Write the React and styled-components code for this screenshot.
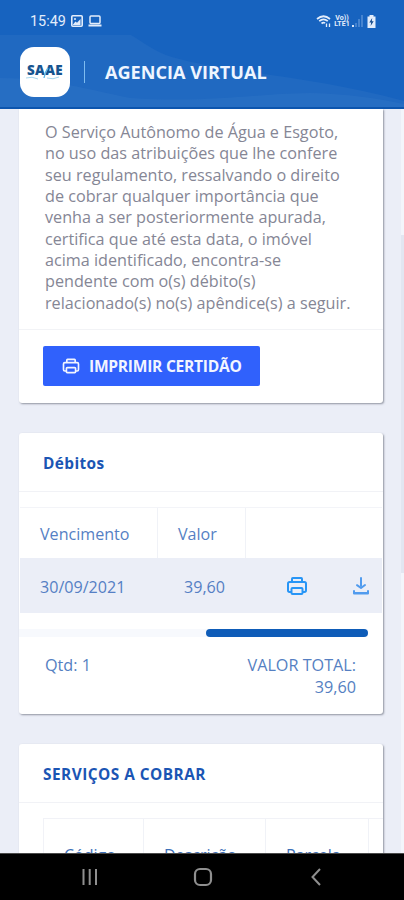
import React from "react"
import styled, { createGlobalStyle } from "styled-components"

const GlobalStyle = createGlobalStyle`
  * {
    box-sizing: border-box;
  }
  body {
    margin: 0;
    background-color: #ebeef7;
    font-family: "Open Sans", "Noto Sans", sans-serif;
  }
`

const Screen = styled.div`
  width: 404px;
  height: 900px;
  display: flex;
  flex-direction: column;
  overflow: hidden;
`

const Header = styled.header`
  position: relative;
  height: 109px;
  flex-shrink: 0;
  background-color: #1763bf;
  border-bottom: 2px solid #0c55ae;
`

const Waves = styled.svg`
  position: absolute;
  inset: 0;
`

const StatusBar = styled.div`
  position: relative;
  display: flex;
  align-items: center;
  height: 42px;
  padding: 0 27px 0 30px;
  color: #e3edfb;
`

const Clock = styled.span`
  width: 41px;
  font-family: Roboto, sans-serif;
  font-size: 14.4px;
  white-space: nowrap;
`

const StatusIcons = styled.div`
  display: flex;
  align-items: center;
  gap: ${({ $gap }) => $gap}px;
  margin-left: ${({ $right }) => ($right ? "auto" : "0")};
`

const Network = styled.span`
  display: flex;
  flex-direction: column;
  align-items: center;
  width: 18px;
  font: bold 7px/6.5px Roboto, sans-serif;
  white-space: nowrap;
`

const TitleBar = styled.div`
  position: relative;
  display: flex;
  align-items: center;
  height: 60px;
  padding-left: 20px;
`

const Logo = styled.div`
  position: relative;
  width: 50px;
  height: 50px;
  border-radius: 14px;
  background-color: #fff;
  color: #17548f;
  font-size: 13.4px;
  font-weight: 800;
  line-height: 46px;
  letter-spacing: 0.4px;
  text-align: center;
`

const LogoWave = styled.svg`
  position: absolute;
  left: 5px;
  top: 18px;
`

const Separator = styled.div`
  width: 1px;
  height: 22px;
  margin: 0 20px 0 14px;
  background-color: #7ebcf0;
`

const Title = styled.h1`
  margin: 0;
  color: #eef5ff;
  font-size: 18.1px;
  font-weight: 700;
`

const Content = styled.main`
  position: relative;
  flex: 1;
  min-height: 0;
  padding: 0 21px 0 19px;
  overflow: hidden;
`

const PageScroll = styled.div`
  position: absolute;
  top: 0;
  right: 0;
  width: 3px;
  height: 100%;
  background-color: #f3f5fb;
`

const PageThumb = styled.div`
  height: 338px;
  margin-top: 126px;
  background-color: #e2e6f1;
`

const Card = styled.section`
  height: ${({ $height }) => $height}px;
  margin-bottom: 30px;
  background-color: #fff;
  border-radius: ${({ $cut }) => ($cut ? "0 0 3px 3px" : "3px")};
  box-shadow: 1px 1px 2px rgba(70, 74, 90, 0.55);
`

const Notice = styled.div`
  height: 221px;
  padding: 13px 0 0 26px;
  border-bottom: 1px solid #f2f3f6;
  color: #858695;
  font-size: 16.2px;
  line-height: 21.35px;
`

const Line = styled.div`
  white-space: nowrap;
`

const PrintButton = styled.button`
  display: flex;
  align-items: center;
  gap: 8px;
  width: 217px;
  height: 40px;
  margin: 16px 0 0 24px;
  padding: 0 0 0 18px;
  border: 0;
  border-radius: 2px;
  background-color: #3061fc;
  color: #f2f5ff;
  font: 700 15.6px "Open Sans", sans-serif;
  letter-spacing: -0.27px;
  white-space: nowrap;
`

const CardTitle = styled.h2`
  height: 59px;
  margin: 0;
  padding-left: 24px;
  border-bottom: 1px solid #f1f2f6;
  color: #1b55b4;
  font-size: 15.4px;
  font-weight: 700;
  line-height: 61px;
  letter-spacing: ${({ $spacing }) => $spacing || 0}px;
`

const TableRow = styled.div`
  display: grid;
  grid-template-columns: 138px 88px 1fr;
  height: ${({ $striped }) => ($striped ? 55 : 51)}px;
  margin: ${({ $striped }) => ($striped ? "0 1px 0 1px" : "15px 1px 0 1px")};
  border-top: ${({ $striped }) => ($striped ? "0" : "1px solid #f3f4f8")};
  background-color: ${({ $striped }) => ($striped ? "#ebeef7" : "#fff")};
  color: #557fc4;
  font-size: 16.1px;
`

const Cell = styled.div`
  display: flex;
  align-items: center;
  padding-top: 2px;
  padding-left: ${({ $pad }) => $pad || 20}px;
  border-right: ${({ $line }) => ($line ? "1px solid #f0f2f7" : "0")};
`

const Actions = styled.div`
  display: flex;
  align-items: center;
  justify-content: space-between;
  padding: 0 9px 0 39px;
`

const PrintAction = styled.span`
  display: flex;
  color: #2795f6;
`

const ScrollTrack = styled.div`
  height: 8px;
  margin: 16px 15px 0 0;
  background-color: #f7f9fd;
`

const ScrollThumb = styled.div`
  width: 162px;
  height: 8px;
  margin-left: auto;
  border-radius: 4px;
  background-color: #0e5cb8;
`

const Totals = styled.div`
  display: flex;
  justify-content: space-between;
  padding: 18px 27px 0 26px;
  color: #557fc2;
  font-size: 16.2px;
  line-height: 21.5px;
`

const Total = styled.div`
  text-align: right;
`

const ServiceHead = styled.div`
  display: grid;
  grid-template-columns: 100px 122px 103px;
  height: 71px;
  margin: 15px 0 0 24px;
  border-top: 1px solid #f1f2f7;
  border-left: 1px solid #f1f2f7;
  color: #3e70b8;
  font-size: 16px;
`

const NavBar = styled.nav`
  flex-shrink: 0;
  height: 47px;
  background-color: #000;
  border-top: 1px solid #4a4a4a;
`

const PrinterIcon = ({ size }) => (
  <svg width={size} height={size} viewBox="0 0 24 24" fill="currentColor">
    <path d="M19.36 7H18V5a1.92 1.92 0 0 0-1.83-2H7.83A1.92 1.92 0 0 0 6 5v2H4.64A2.66 2.66 0 0 0 2 9.67v6.66A2.66 2.66 0 0 0 4.64 19h.86a2 2 0 0 0 2 2h9a2 2 0 0 0 2-2h.86A2.66 2.66 0 0 0 22 16.33V9.67A2.66 2.66 0 0 0 19.36 7zM8 5h8v2H8zm-.5 14v-4h9v4zM20 16.33a.66.66 0 0 1-.64.67h-.86v-2a2 2 0 0 0-2-2h-9a2 2 0 0 0-2 2v2h-.86a.66.66 0 0 1-.64-.67V9.67A.66.66 0 0 1 4.64 9h14.72a.66.66 0 0 1 .64.67z" />
  </svg>
)

const DownloadIcon = () => (
  <svg width="24" height="24" viewBox="0 0 24 24" fill="#519bee">
    <path d="M4 17a1 1 0 0 1 2 0V18h12V17a1 1 0 0 1 2 0V19.500a1 1 0 0 1-1 1H5a1 1 0 0 1-1-1z" />
    <path d="M12 15a1 1 0 0 1-.58-.18l-4-2.820a1 1 0 0 1 1.160-1.630L12 12.760l3.400-2.560a1 1 0 0 1 1.200 1.600l-4 3a1 1 0 0 1-.6.200z" />
    <path d="M12 13a1 1 0 0 1-1-1V4a1 1 0 0 1 2 0v8a1 1 0 0 1-1 1z" />
  </svg>
)

const notice = [
  "O Serviço Autônomo de Água e Esgoto,",
  "no uso das atribuições que lhe confere",
  "seu regulamento, ressalvando o direito",
  "de cobrar qualquer importância que",
  "venha a ser posteriormente apurada,",
  "certifica que até esta data, o imóvel",
  "acima identificado, encontra-se",
  "pendente com o(s) débito(s)",
  "relacionado(s) no(s) apêndice(s) a seguir.",
]

const App = () => {
  return (
    <Screen>
      <GlobalStyle />
      <Header>
        <Waves width="404" height="107" viewBox="0 0 404 107">
          <path d="M0 35H131C143 42 155 52 172 57C220 72 310 75 404 101V107H0Z" fill="#2069c1" />
          <path d="M0 78C50 78 90 90 130 98C210 103 250 94 310 93C350 94 380 99 404 104V107H0Z" fill="#2b72c4" opacity="0.6" />
        </Waves>
        <StatusBar>
          <Clock>15:49</Clock>
          <StatusIcons $gap={5}>
            <svg width="12" height="12" viewBox="0 0 12 12">
              <rect x="0.8" y="0.8" width="10.400" height="10.400" rx="1" fill="none" stroke="currentColor" strokeWidth="1.600" />
              <path d="M2 9.500L4.500 6.500L6 7.800L9.500 4V10H2Z" fill="currentColor" />
              <circle cx="4" cy="4" r="1" fill="currentColor" />
            </svg>
            <svg width="14" height="12" viewBox="0 0 14 12" fill="none" stroke="currentColor">
              <rect x="2" y="1" width="10" height="7.500" rx="1" strokeWidth="1.500" />
              <path d="M0.500 10.500H13.500" strokeWidth="2" />
            </svg>
          </StatusIcons>
          <StatusIcons $gap={1} $right>
            <svg width="16" height="13" viewBox="0 0 16 13" fill="none" stroke="currentColor" strokeWidth="1.700">
              <path d="M1 4Q7.500 -1.500 14 4M3.200 6.200Q7.500 2.500 11.800 6.200M5.500 8.500Q7.500 6.800 9 8.200" />
              <path d="M10.500 12V8.500M13.500 8.500V12" strokeWidth="1.300" />
            </svg>
            <Network>
              <span>Vo))</span>
              <span>LTE1</span>
            </Network>
            <svg width="12" height="12" viewBox="0 0 12 12">
              <path d="M0 10H2V12H0Z" fill="#d5e4f8" />
              <path d="M3 8H5V12H3ZM6 4H8V12H6ZM9 0H11V12H9Z" fill="#4684d0" />
            </svg>
            <svg width="12" height="13" viewBox="0 0 12 13">
              <path d="M4.500 0H8.500V1.500H10.500V13H2.500V1.500H4.500Z" fill="currentColor" />
              <path d="M7.200 3L4.300 7.500H6.200L5.600 11L8.700 6.300H6.800Z" fill="#174c8e" />
            </svg>
          </StatusIcons>
        </StatusBar>
        <TitleBar>
          <Logo>
            SAAE
            <LogoWave width="40" height="16" viewBox="0 0 40 16" fill="none">
              <path d="M19 13Q20 7 23 3" stroke="#58b5e4" strokeWidth="1.300" />
              <path d="M1 13Q7 11 13 14M22 13Q28 15 34 12" stroke="#8fcbe9" strokeWidth="0.800" />
            </LogoWave>
          </Logo>
          <Separator />
          <Title>AGENCIA VIRTUAL</Title>
        </TitleBar>
      </Header>
      <Content>
        <Card $height={294} $cut>
          <Notice>
            {notice.map((line) => (
              <Line key={line}>{line}</Line>
            ))}
          </Notice>
          <PrintButton>
            <PrinterIcon size={20} />
            IMPRIMIR CERTIDÃO
          </PrintButton>
        </Card>
        <Card $height={281}>
          <CardTitle $spacing={0.4}>Débitos</CardTitle>
          <TableRow>
            <Cell $line>Vencimento</Cell>
            <Cell $line>Valor</Cell>
          </TableRow>
          <TableRow $striped>
            <Cell>30/09/2021</Cell>
            <Cell $pad={26}>39,60</Cell>
            <Actions>
              <PrintAction>
                <PrinterIcon size={24} />
              </PrintAction>
              <DownloadIcon />
            </Actions>
          </TableRow>
          <ScrollTrack>
            <ScrollThumb />
          </ScrollTrack>
          <Totals>
            <span>Qtd: 1</span>
            <Total>
              VALOR TOTAL:
              <br />
              39,60
            </Total>
          </Totals>
        </Card>
        <Card $height={200}>
          <CardTitle $spacing={0.48}>SERVIÇOS A COBRAR</CardTitle>
          <ServiceHead>
            <Cell $line>Código</Cell>
            <Cell $line>Descrição</Cell>
            <Cell $line>Parcela</Cell>
          </ServiceHead>
        </Card>
        <PageScroll>
          <PageThumb />
        </PageScroll>
      </Content>
      <NavBar>
        <svg width="404" height="46" viewBox="0 0 404 46" fill="none" stroke="#8f8f8f" strokeWidth="2">
          <path d="M83.500 15V31M89.700 15V31M96 15V31" />
          <rect x="195" y="15" width="16" height="16" rx="5" strokeWidth="2.200" />
          <path d="M320 15L312.500 23L320 31" />
        </svg>
      </NavBar>
    </Screen>
  )
}

export default App
